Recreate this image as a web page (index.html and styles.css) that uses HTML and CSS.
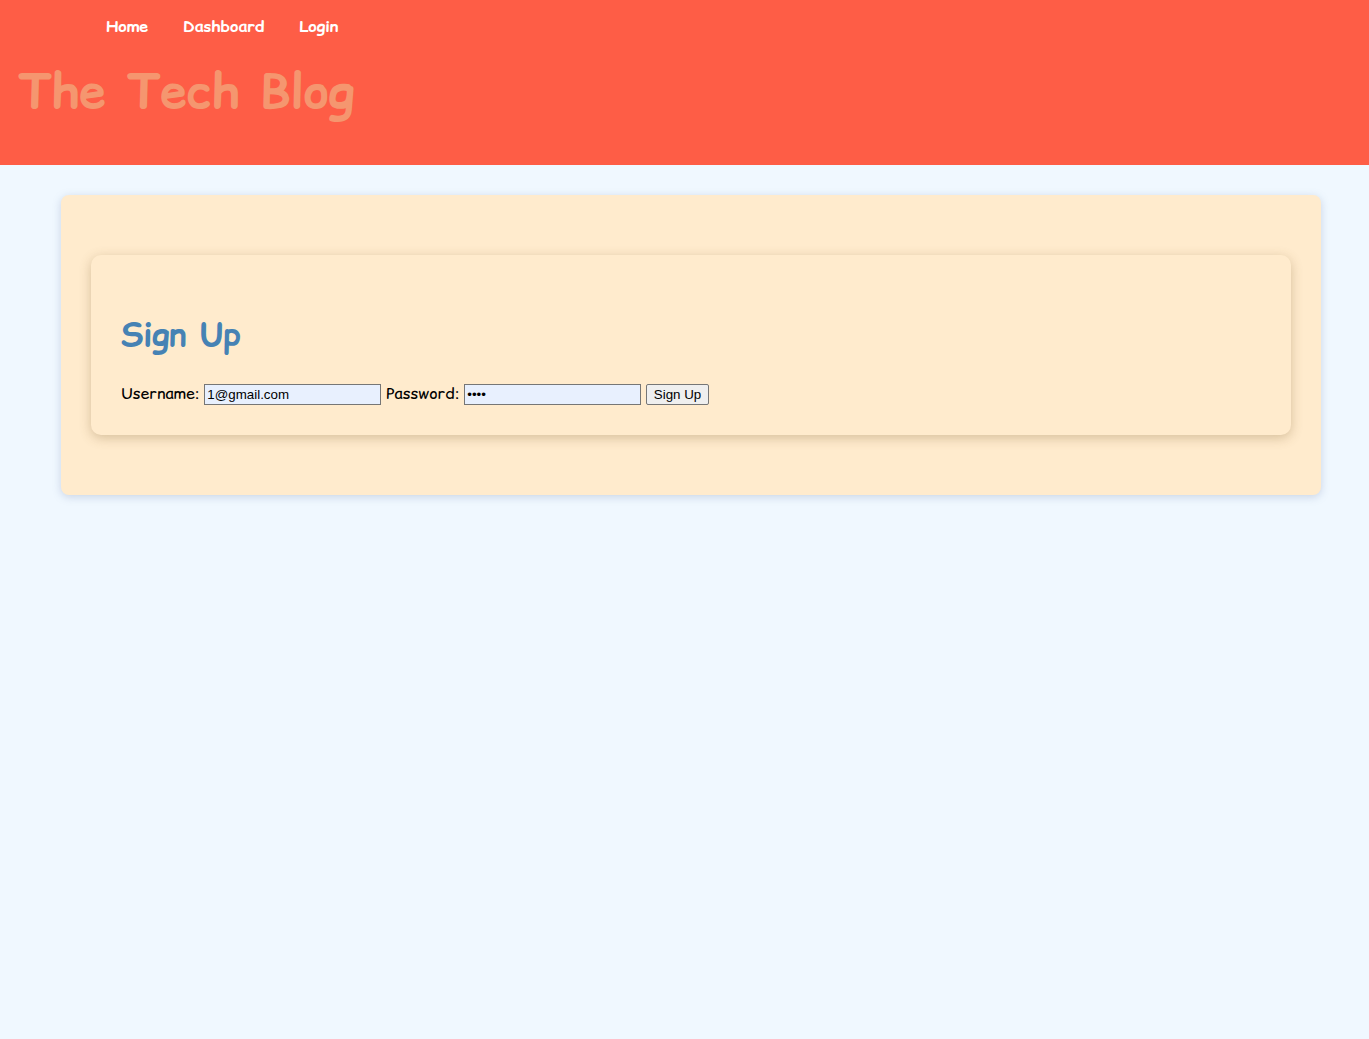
FILE: index.html
```html
<!DOCTYPE html>
<html lang="en">
<head>
<meta charset="utf-8">
<title>The Tech Blog</title>
<link rel="stylesheet" href="styles.css">
</head>
<body>
<header class="site-header">
  <nav class="nav">
    <a class="nav-link" href="#">Home</a>
    <a class="nav-link" href="#">Dashboard</a>
    <a class="nav-link" href="#">Login</a>
  </nav>
  <h1 class="site-title">The Tech Blog</h1>
</header>
<main class="main">
  <section class="outer-card">
    <div class="inner-card">
      <h2 class="card-title">Sign Up</h2>
      <form class="signup-form">
        <label class="field-label" for="username">Username:</label> <input class="field-input" id="username" type="text" value="1@gmail.com"> <label class="field-label" for="password">Password:</label> <input class="field-input" id="password" type="password" value="1234"> <button class="submit-btn" type="button">Sign Up</button>
      </form>
    </div>
  </section>
</main>
</body>
</html>
```

FILE: styles.css
```css
html, body {
  margin: 0;
  padding: 0;
}

body {
  background: #f0f8ff;
  font-family: "Comic Sans MS", "Comic Relief", "Comic Neue", cursive, sans-serif;
  min-height: 1039px;
}

.site-header {
  background: #fe5d46;
  height: 165px;
  box-sizing: border-box;
  padding: 15px 18px 0;
}

.nav {
  display: flex;
  gap: 35px;
  padding-left: 88px;
}

.nav-link {
  color: #ffffff;
  font-weight: bold;
  font-size: 16px;
  text-decoration: none;
}

.site-title {
  margin: 20px 0 0;
  font-size: 48px;
  color: #f5966f;
  font-weight: bold;
}

.main {
  padding: 30px 48px 0 61px;
}

.outer-card {
  background: #ffebcd;
  border-radius: 8px;
  box-shadow: 0 2px 8px rgba(100, 120, 160, 0.28);
  padding: 30px;
}

.inner-card {
  background: #ffebcd;
  border-radius: 10px;
  box-shadow: 0 3px 12px rgba(120, 90, 40, 0.3);
  margin: 30px 0;
  padding: 30px;
}

.card-title {
  margin: 26.5px 0 25.5px;
  color: #4682b4;
  font-size: 32px;
  font-weight: bold;
}

.signup-form {
  font-size: 16px;
  color: #000;
}

.field-input {
  font-family: "Liberation Sans", Arial, sans-serif;
  font-size: 13.33px;
  width: 177px;
  height: 21px;
  box-sizing: border-box;
  border: 1px solid #767676;
  background: #e8f0fe;
  padding: 1px 2px;
  margin: 0;
  border-radius: 0;
  color: #000;
}

.submit-btn {
  font-family: "Liberation Sans", Arial, sans-serif;
  font-size: 13.33px;
  height: 21px;
  width: 63px;
  padding: 1px 6px;
  margin: 0;
  background: #efefef;
  border: 1px solid #767676;
  border-radius: 2px;
  color: #000;
}
```
